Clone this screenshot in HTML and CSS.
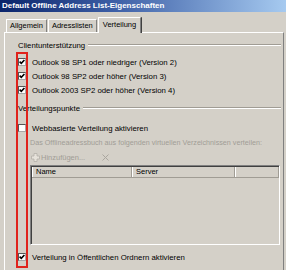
FILE: index.html
```html
<!DOCTYPE html>
<html lang="de">
<head>
    <meta charset="UTF-8">
    <title>Default Offline Address List-Eigenschaften</title>
    <link rel="stylesheet" href="styles.css">
</head>
<body>
    <div class="window">
        <div class="titlebar">Default Offline Address List-Eigenschaften</div>

        <div class="tabs">
            <div class="tab">Allgemein</div>
            <div class="tab">Adresslisten</div>
            <div class="tab active">Verteilung</div>
        </div>

        <div class="panel">
            <div class="group-title"><span>Clientunterstützung</span></div>

            <div class="versions">
                <label class="check">
                    <span class="box"><svg viewBox="0 0 6 6"><polyline points="0.6,2.6 2.3,4.4 5.4,1"/></svg></span>
                    Outlook 98 SP1 oder niedriger (Version 2)
                </label>
                <label class="check">
                    <span class="box"><svg viewBox="0 0 6 6"><polyline points="0.6,2.6 2.3,4.4 5.4,1"/></svg></span>
                    Outlook 98 SP2 oder höher (Version 3)
                </label>
                <label class="check">
                    <span class="box"><svg viewBox="0 0 6 6"><polyline points="0.6,2.6 2.3,4.4 5.4,1"/></svg></span>
                    Outlook 2003 SP2 oder höher (Version 4)
                </label>
            </div>

            <div class="group-title second"><span>Verteilungspunkte</span></div>

            <label class="check web">
                <span class="box"></span>
                Webbasierte Verteilung aktivieren
            </label>

            <div class="hint">Das Offlineadressbuch aus folgenden virtuellen Verzeichnissen verteilen:</div>

            <div class="toolbar">
                <span class="tool">
                    <svg class="plus" viewBox="0 0 9 9"><path d="M3 0.5h3v2.5h2.5v3h-2.5v2.5h-3v-2.5h-2.5v-3h2.5z"/></svg>
                    Hinzufügen...
                </span>
                <svg class="remove" viewBox="0 0 7 7"><path d="M0.5 0.5l6 6M6.5 0.5l-6 6"/></svg>
            </div>

            <div class="list">
                <div class="list-head">
                    <div class="col name">Name</div>
                    <div class="col server">Server</div>
                    <div class="col rest"></div>
                </div>
            </div>

            <label class="check public">
                <span class="box"><svg viewBox="0 0 6 6"><polyline points="0.6,2.6 2.3,4.4 5.4,1"/></svg></span>
                Verteilung in Öffentlichen Ordnern aktivieren
            </label>
        </div>

        <!-- red marker drawn over the checkbox column -->
        <div class="marker"></div>
    </div>
</body>
</html>
```

FILE: styles.css
```css
* {
    box-sizing: border-box;
}

body {
    margin: 0;
    width: 286px;
    height: 270px;
    overflow: hidden;
    background: #d4d0c8;
    font-family: "Liberation Sans", Arial, sans-serif;
    font-size: 7.8px;
    color: #000;
}

.window {
    position: relative;
    height: 270px;
}

.titlebar {
    height: 12px;
    line-height: 12px;
    padding-left: 2px;
    background: linear-gradient(90deg, #0a246a 0%, #3d5fa6 40%, #a6caf0 100%);
    color: #fff;
    font-weight: bold;
    font-size: 8px;
    white-space: nowrap;
    overflow: hidden;
}

/* tab strip */
.tabs {
    display: flex;
    align-items: flex-end;
    height: 20px;
    padding-left: 6px;
    gap: 1px;
    font-size: 7.5px;
}

.tab {
    height: 13px;
    line-height: 12px;
    padding: 0 3px;
    border: 1px solid #fff;
    border-right-color: #808080;
    border-bottom: none;
    border-radius: 1px 1px 0 0;
    white-space: nowrap;
}

.tab.active {
    position: relative;
    z-index: 1;
    height: 16px;
    margin-bottom: -1px;
    padding: 0 4px;
    line-height: 13px;
    background: #d4d0c8;
    box-shadow: 1px 0 0 #404040;
}

.panel {
    height: 238px;
    margin: 0 2px 0 4px;
    padding: 5px 2px 0 12px;
    border-top: 1px solid #fff;
    border-left: 1px solid #fff;
    border-right: 1px solid #808080;
}

/* group headings with etched line */
.group-title {
    display: flex;
    align-items: center;
    gap: 3px;
    height: 14px;
    padding-left: 1px;
}

.group-title::after {
    content: "";
    flex: 1;
    border-top: 1px solid #a09c94;
    border-bottom: 1px solid #fff;
}

.group-title.second {
    margin-top: 4px;
}

.versions {
    margin-top: 3px;
}

/* checkboxes */
.check {
    display: flex;
    align-items: center;
    height: 14px;
    padding-left: 1px;
    white-space: nowrap;
}

.box {
    display: flex;
    align-items: center;
    justify-content: center;
    width: 8px;
    height: 8px;
    margin-right: 6px;
    background: #fff;
    border: 1px solid;
    border-color: #555 #a8a8a8 #a8a8a8 #555;
}

.box svg {
    width: 6px;
    height: 6px;
}

.box polyline {
    fill: none;
    stroke: #000;
    stroke-width: 1.6;
}

.check.web {
    margin-top: 6px;
}

.check.public {
    margin-top: 5px;
}

.hint {
    height: 14px;
    line-height: 14px;
    margin: 1px 0 0 13px;
    font-size: 7.2px;
    color: #a19d96;
    white-space: nowrap;
}

.toolbar {
    display: flex;
    align-items: center;
    gap: 17px;
    height: 14px;
    margin-left: 14px;
    font-size: 7.5px;
    color: #a19d96;
}

.tool {
    display: flex;
    align-items: center;
    gap: 1px;
}

.plus {
    width: 9px;
    height: 9px;
}

.plus path {
    fill: #e6e2da;
    stroke: #b4b0a8;
    stroke-width: 0.8;
}

.remove {
    width: 7px;
    height: 7px;
}

.remove path {
    fill: none;
    stroke: #aaa69f;
    stroke-width: 1;
}

/* disabled list view */
.list {
    height: 80px;
    margin: 1px 1px 0 13px;
    border: 1px solid;
    border-color: #808080 #fff #fff #808080;
    box-shadow: inset 1px 1px 0 #404040;
    padding: 1px 0 0 1px;
}

.list-head {
    display: flex;
    height: 11px;
    border-bottom: 1px solid #a09c94;
    font-size: 7.5px;
}

.col {
    padding-left: 3px;
    line-height: 10px;
    border-left: 1px solid #fff;
    border-right: 1px solid #a09c94;
}

.col.name {
    width: 100px;
}

.col.server {
    width: 103px;
}

.col.rest {
    flex: 1;
}

.marker {
    position: absolute;
    left: 16px;
    top: 52px;
    width: 12px;
    height: 216px;
    border: 2px solid #e0231c;
}
```
